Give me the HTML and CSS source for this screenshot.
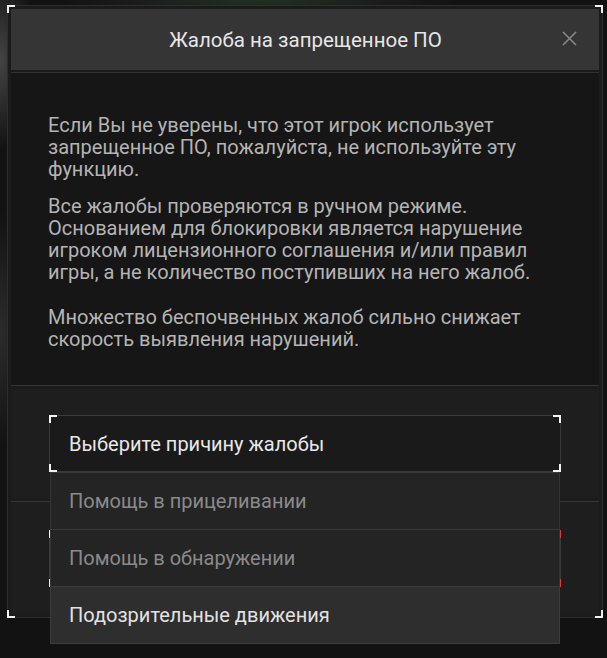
FILE: index.html
```html
<!DOCTYPE html>
<html lang="ru">
<head>
<meta charset="utf-8">
<link rel="stylesheet" href="styles.css">
</head>
<body>
<div class="modal">
  <span class="corner tl"></span><span class="corner tr"></span>
  <span class="corner bl"></span><span class="corner br"></span>
  <header class="head">
    <h1 class="title">Жалоба на запрещенное ПО</h1>
    <button class="close" aria-label="Закрыть">
      <svg width="15" height="15" viewBox="0 0 15 15"><path d="M1 1L14 14M14 1L1 14" stroke="#8a8a8a" stroke-width="1.5" fill="none"/></svg>
    </button>
  </header>
  <div class="body">
    <p class="p1">Если Вы не уверены, что этот игрок использует запрещенное ПО, пожалуйста, не используйте эту функцию.</p>
    <p class="p2">Все жалобы проверяются в ручном режиме. Основанием для блокировки является нарушение игроком лицензионного соглашения и/или правил игры, а не количество поступивших на него жалоб.</p>
    <p class="p3">Множество беспочвенных жалоб сильно снижает скорость выявления нарушений.</p>
  </div>
  <div class="section select-section">
    <div class="select">
      <span class="corner tl"></span><span class="corner tr"></span>
      <span class="corner bl"></span><span class="corner br"></span>
      <span class="select-label">Выберите причину жалобы</span>
      <ul class="options">
        <li class="option">Помощь в прицеливании</li>
        <li class="option">Помощь в обнаружении</li>
        <li class="option active">Подозрительные движения</li>
      </ul>
    </div>
  </div>
  <div class="section buttons">
    <button class="btn" aria-label="Отмена">
      <span class="corner tl"></span><span class="corner bl"></span>
    </button>
    <button class="btn primary" aria-label="Отправить">
      <span class="corner tr red"></span><span class="corner br red"></span>
    </button>
  </div>
</div>
</body>
</html>
```
FILE: styles.css
```css
* { box-sizing: border-box; }
html, body { margin: 0; padding: 0; }
body {
  width: 607px;
  height: 658px;
  overflow: hidden;
  background:
    radial-gradient(ellipse 40px 90px at 0px 60px, #444 0%, rgba(60,60,60,0) 100%),
    radial-gradient(ellipse 30px 120px at 0px 330px, #2c2c2c 0%, rgba(40,40,40,0) 100%),
    radial-gradient(ellipse 200px 20px at 260px 0px, #243024 0%, rgba(30,40,30,0) 100%),
    #121212;
  font-family: Roboto, "Noto Sans", sans-serif;
  padding: 5px 0 0 7px;
}
.modal {
  position: relative;
  width: 596px;
  height: 613px;
  border: 1px solid #2e2e2e;
  background: #1b1b1b;
  padding: 3px;
  display: flex;
  flex-direction: column;
}
.corner {
  position: absolute;
  width: 8px;
  height: 8px;
  border-color: #f2f2f2;
  border-style: solid;
  border-width: 0;
}
.corner.tl { left: -1px; top: -1px; border-left-width: 2px; border-top-width: 2px; }
.corner.tr { right: -1px; top: -1px; border-right-width: 2px; border-top-width: 2px; }
.corner.bl { left: -1px; bottom: -1px; border-left-width: 2px; border-bottom-width: 2px; }
.corner.br { right: -1px; bottom: -1px; border-right-width: 2px; border-bottom-width: 2px; }
.corner.red { border-color: #e0393b; }

.head {
  position: relative;
  height: 61px;
  background: #353535;
  display: flex;
  align-items: center;
  justify-content: center;
}
.title {
  margin: 0;
  font-weight: 400;
  font-size: 20.5px;
  color: #e6e6e6;
  padding-left: 1px;
}
.close {
  position: absolute;
  right: 22px;
  top: 22px;
  width: 15px;
  height: 15px;
  padding: 0;
  border: 0;
  background: none;
  display: block;
}
.close svg { display: block; }

.body {
  margin-top: 2px;
  border-top: 1px solid #303030;
  border-bottom: 1px solid #353535;
  background: #161616;
  height: 314px;
  padding: 41px 40px 0 37px;
}
.body p {
  margin: 0;
  font-size: 20px;
  line-height: 22px;
  color: #b4b4b4;
}
.body .p1 { margin-bottom: 15px; }
.body .p2 { margin-bottom: 23px; }

.section {
  background: #1e1e1e;
}
.select-section {
  margin-top: 3px;
  height: 109px;
  padding: 26px 0 0 38px;
}
.select {
  position: relative;
  width: 512px;
  height: 57px;
  background: #1a1a1a;
  border: 1px solid #3a3a3a;
  display: flex;
  align-items: center;
  padding-left: 19px;
}
.select-label {
  font-size: 20px;
  color: #e8e8e8;
}
.options {
  position: absolute;
  z-index: 5;
  left: 0;
  right: 0;
  top: 56px;
  margin: 0;
  padding: 0;
  list-style: none;
}
.option {
  height: 58px;
  background: #242424;
  border: 1px solid #343434;
  border-top-color: #3a3a3a;
  display: flex;
  align-items: center;
  padding-left: 18px;
  font-size: 20px;
  color: #8a8a8a;
}
.option + .option { margin-top: -1px; }
.option.active {
  background: #2e2e2e;
  color: #e2e2e2;
  border-color: #3c3c3c;
}

.buttons {
  margin-top: 3px;
  border-top: 1px solid #363636;
  padding: 28px 0 0 38px;
  flex: 1;
  display: flex;
  align-items: flex-start;
  gap: 10px;
}
.btn {
  position: relative;
  width: 251px;
  height: 57px;
  background: #262626;
  border: 1px solid #3a3a3a;
}
.btn.primary { background: #3a2020; }
```
